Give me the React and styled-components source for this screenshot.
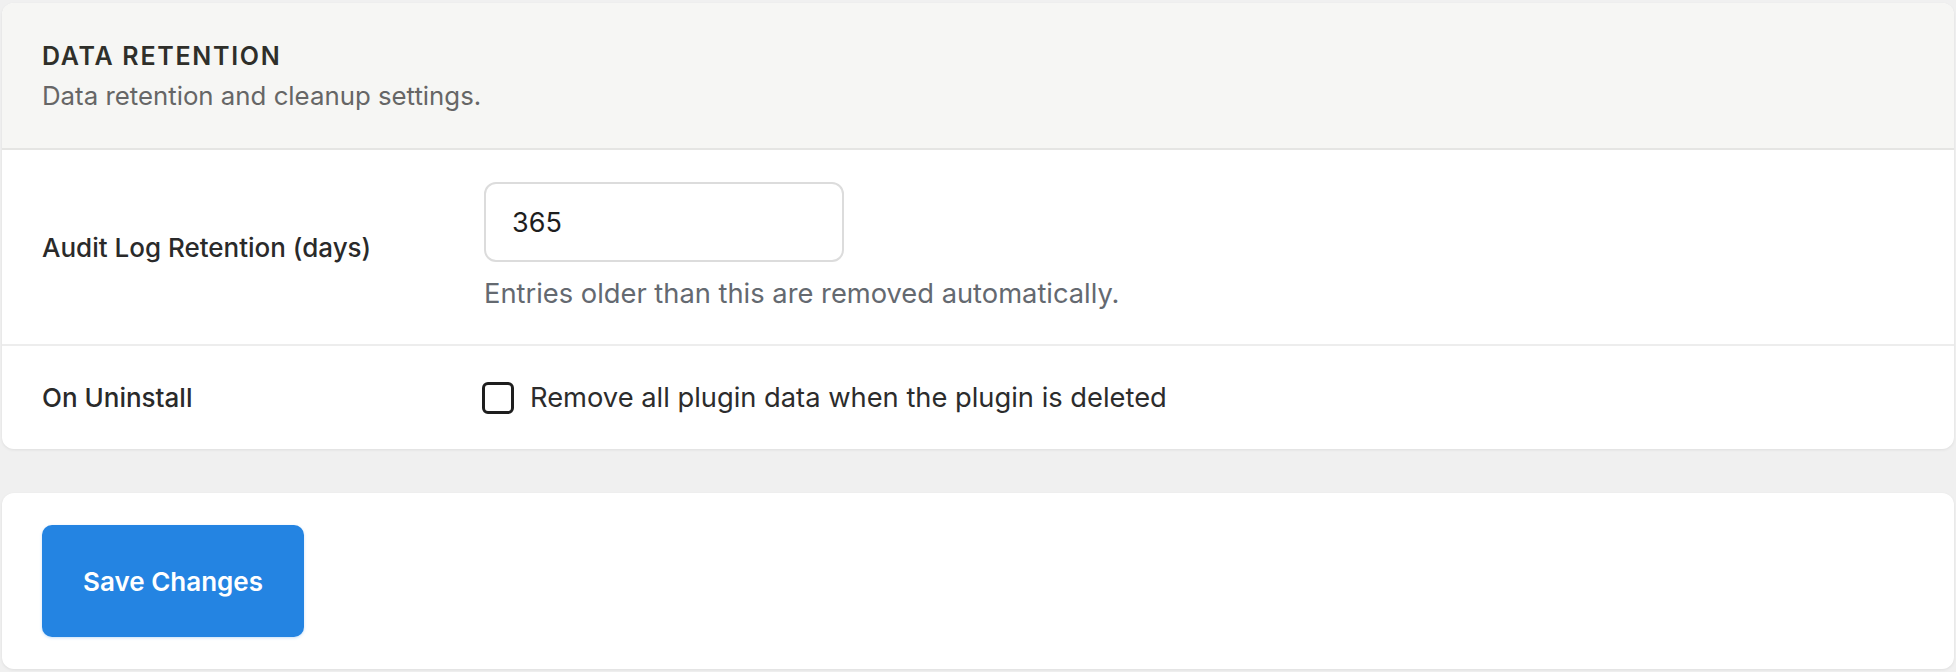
import React from 'react';
import styled, { createGlobalStyle } from 'styled-components';

const GlobalStyle = createGlobalStyle`
  html, body {
    margin: 0;
    padding: 0;
    background: #f0f0f0;
    font-family: Inter, "Noto Sans", "Liberation Sans", sans-serif;
    -webkit-font-smoothing: antialiased;
  }
`;

function App() {
    return (
        <Page>
            <GlobalStyle />
            <Card>
                <CardHeader>
                    <Title>Data Retention</Title>
                    <Subtitle>Data retention and cleanup settings.</Subtitle>
                </CardHeader>
                <Row padding="32px 40px">
                    <Label>Audit Log Retention (days)</Label>
                    <Field>
                        <NumberInput type="number" defaultValue="365" />
                        <Help>Entries older than this are removed automatically.</Help>
                    </Field>
                </Row>
                <Row padding="35px 40px" last>
                    <Label>On Uninstall</Label>
                    <CheckLabel>
                        <Checkbox type="checkbox" />
                        Remove all plugin data when the plugin is deleted
                    </CheckLabel>
                </Row>
            </Card>
            <Card padded>
                <SaveButton>Save Changes</SaveButton>
            </Card>
        </Page>
    );
}

export default App;

//#region Styling

const Page = styled.div`
  padding: 3px 2px;
  display: flex;
  flex-direction: column;
  gap: 44px;
`;

const Card = styled.div`
  background: #fff;
  border-radius: 12px;
  box-shadow: 0 1px 3px rgba(0, 0, 0, 0.08);
  overflow: hidden;
  padding: ${p => (p.padded ? '32px 40px' : '0')};
`;

const CardHeader = styled.div`
  background: #f6f6f4;
  padding: 37px 40px 34px;
  border-bottom: 2px solid #e5e5e3;
`;

const Title = styled.h2`
  margin: 0;
  font-size: 25px;
  line-height: 32px;
  font-weight: 600;
  letter-spacing: 1.7px;
  text-transform: uppercase;
  color: #2f2f2a;
`;

const Subtitle = styled.p`
  margin: 6px 0 0;
  font-size: 25.8px;
  line-height: 36px;
  color: #666;
`;

const Row = styled.div`
  display: grid;
  grid-template-columns: 442px 1fr;
  align-items: center;
  padding: ${p => p.padding};
  border-bottom: ${p => (p.last ? 'none' : '2px solid #ededed')};
`;

const Label = styled.div`
  font-size: 26px;
  font-weight: 500;
  color: #2a2a2a;
`;

const Field = styled.div`
  display: flex;
  flex-direction: column;
  align-items: flex-start;
`;

const NumberInput = styled.input`
  box-sizing: border-box;
  width: 360px;
  height: 80px;
  padding: 0 26px;
  border: 2px solid #dcdcdc;
  border-radius: 12px;
  font-family: inherit;
  font-size: 27px;
  color: #1e1e1e;
  background: #fff;
  outline: none;
  appearance: textfield;
  -moz-appearance: textfield;
  &::-webkit-inner-spin-button,
  &::-webkit-outer-spin-button {
    -webkit-appearance: none;
    margin: 0;
  }
`;

const Help = styled.p`
  margin: 14px 0 0;
  font-size: 27.3px;
  line-height: 36px;
  color: #646970;
`;

const CheckLabel = styled.label`
  display: flex;
  align-items: center;
  gap: 16px;
  margin-left: -2px;
  font-size: 27.3px;
  color: #2c2c2c;
`;

const Checkbox = styled.input`
  appearance: none;
  -webkit-appearance: none;
  box-sizing: border-box;
  margin: 0;
  width: 32px;
  height: 32px;
  border: 3px solid #1e1e1e;
  border-radius: 6px;
  background: #fff;
`;

const SaveButton = styled.button`
  width: 262px;
  height: 112px;
  border: none;
  border-radius: 10px;
  background: #2484e2;
  color: #fff;
  font-family: inherit;
  font-size: 26px;
  font-weight: 600;
  cursor: pointer;
  box-shadow: 0 1px 3px rgba(36, 132, 226, 0.25);
  &:hover {
    background: #1f76cc;
  }
`;

//#endregion
